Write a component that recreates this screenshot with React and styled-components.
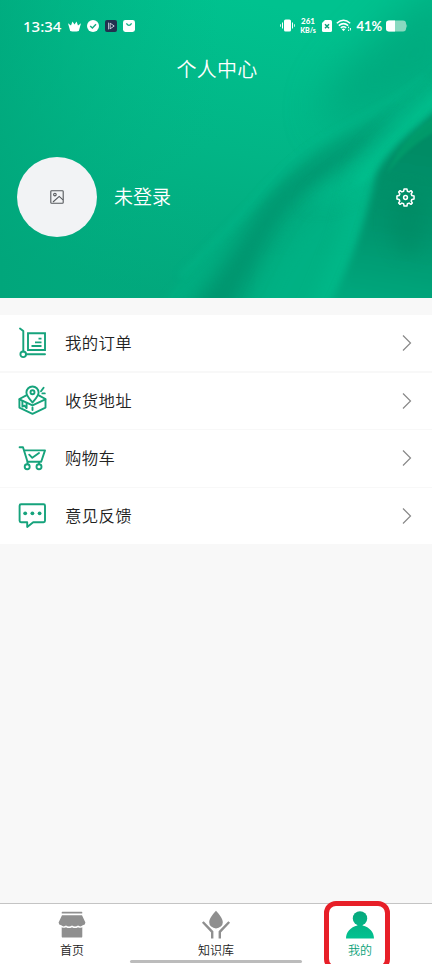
import React from "react";
import styled, { createGlobalStyle } from "styled-components";

const GlobalStyle = createGlobalStyle`
  body {
    margin: 0;
    background-color: #f8f8f8;
    font-family: "Noto Sans CJK SC", sans-serif;
  }
`;

const Page = styled.div`
  display: flex;
  flex-direction: column;
  width: 432px;
  height: 964px;
  overflow: hidden;
  background-color: #f8f8f8;
`;

const Hero = styled.header`
  position: relative;
  height: 298px;
  color: #fff;
  overflow: hidden;
`;

const HeroArt = styled.svg`
  position: absolute;
  inset: 0;
`;

const HeroContent = styled.div`
  position: relative;
  display: flex;
  flex-direction: column;
`;

const StatusBar = styled.div`
  display: flex;
  justify-content: space-between;
  align-items: center;
  height: 51px;
  padding: 0 24px 0 23px;
  font-family: Lato, sans-serif;
`;

const StatusGroup = styled.div`
  display: flex;
  align-items: center;
  gap: ${(props) => props.gap};
`;

const Clock = styled.span`
  width: 39px;
  font-family: "Noto Sans", sans-serif;
  font-size: 15px;
  font-weight: 500;
  line-height: 20px;
  white-space: nowrap;
`;

const NetSpeed = styled.span`
  display: flex;
  flex-direction: column;
  align-items: center;
  width: 18px;
  font-size: 8px;
  font-weight: 900;
  line-height: 9px;
`;

const NetUnit = styled.span`
  font-size: 7px;
  line-height: 8px;
`;

const Percent = styled.span`
  width: 25px;
  font-size: 13px;
  font-weight: 700;
  line-height: 18px;
`;

const Title = styled.h1`
  margin: 0;
  height: 36px;
  padding-left: 2px;
  font-size: 20px;
  font-weight: 350;
  line-height: 36px;
  letter-spacing: 0.3px;
  text-align: center;
`;

const Profile = styled.div`
  display: flex;
  align-items: center;
  height: 80px;
  margin-top: 70px;
  padding: 0 17px;
`;

const Avatar = styled.div`
  display: flex;
  align-items: center;
  justify-content: center;
  width: 80px;
  height: 80px;
  border-radius: 50%;
  background-color: #f2f3f5;
`;

const UserName = styled.span`
  flex-grow: 1;
  margin: -2px 0 0 17px;
  font-size: 19px;
  font-weight: 350;
  line-height: 28px;
`;

const Menu = styled.ul`
  display: flex;
  flex-direction: column;
  gap: 1.2px;
  list-style: none;
  margin: 17px 0 0;
  padding: 0;
`;

const MenuItem = styled.li`
  display: flex;
  align-items: center;
  height: 56.4px;
  padding: 0 20px 0 17px;
  background-color: #fff;
`;

const MenuLabel = styled.span`
  flex-grow: 1;
  margin: -2px 0 0 18px;
  color: #222;
  font-size: 16.4px;
  font-weight: 350;
  letter-spacing: 0.4px;
  line-height: 24px;
`;

const TabBar = styled.nav`
  position: relative;
  display: grid;
  grid-template-columns: repeat(3, 1fr);
  height: 60px;
  margin-top: auto;
  border-top: 1px solid #c4c4c4;
  background-color: #fff;
`;

const Tab = styled.div`
  display: flex;
  flex-direction: column;
  align-items: center;
  padding-top: 6px;
  color: ${(props) => (props.$active ? "#0a9f78" : "#222")};
  font-size: 12px;
  font-weight: 350;
  line-height: 16px;
`;

const TabIcon = styled.svg`
  width: 32px;
  height: 32px;
`;

const HomeIndicator = styled.div`
  position: absolute;
  left: 130px;
  bottom: 1px;
  width: 172px;
  height: 3px;
  border-radius: 2px;
  background-color: #bcbcbc;
`;

const Highlight = styled.div`
  position: absolute;
  left: 324px;
  top: -3px;
  box-sizing: border-box;
  width: 66px;
  height: 70px;
  border: 5px solid #e71f28;
  border-radius: 12px;
`;

const Waves = () => (
  <HeroArt width="432" height="298" viewBox="0 0 432 298">
    <defs>
      <linearGradient id="base" gradientUnits="userSpaceOnUse" x1="250" y1="0" x2="190" y2="298">
        <stop offset="0" stopColor="#00c28f" />
        <stop offset="0.5" stopColor="#02b586" />
        <stop offset="1" stopColor="#02a67b" />
      </linearGradient>
      <linearGradient id="left" x1="0" y1="0" x2="1" y2="0">
        <stop offset="0" stopColor="#00a67b" stopOpacity="0.7" />
        <stop offset="1" stopColor="#00b485" stopOpacity="0" />
      </linearGradient>
      <linearGradient id="corner" gradientUnits="userSpaceOnUse" x1="410" y1="150" x2="385" y2="305">
        <stop offset="0" stopColor="#018c65" />
        <stop offset="0.5" stopColor="#01946d" />
        <stop offset="1" stopColor="#01a87d" />
      </linearGradient>
      <filter id="soft" filterUnits="userSpaceOnUse" x="-40" y="-40" width="520" height="400">
        <feGaussianBlur stdDeviation="1.5" />
      </filter>
      <filter id="softer" filterUnits="userSpaceOnUse" x="-40" y="-40" width="520" height="400">
        <feGaussianBlur stdDeviation="3.5" />
      </filter>
      <filter id="haze" filterUnits="userSpaceOnUse" x="-40" y="-40" width="520" height="400">
        <feGaussianBlur stdDeviation="9" />
      </filter>
      <filter id="cloud" filterUnits="userSpaceOnUse" x="-80" y="-80" width="600" height="460">
        <feGaussianBlur stdDeviation="20" />
      </filter>
      <clipPath id="drape">
        <path d="M440 62C415 85 398 97 373 110C345 126 330 134 310 147C290 160 280 172 268 185C250 206 235 222 227 231C208 250 190 272 165 300H440Z" />
      </clipPath>
    </defs>
    <rect width="432" height="298" fill="url(#base)" />
    <rect width="220" height="298" fill="url(#left)" />
    <path d="M460-30L460 80L330 130C310 100 340 70 400 10Z" fill="#009e76" opacity="0.6" filter="url(#cloud)" />
    <path d="M455 52C415 90 398 99 373 112C345 128 330 136 310 149C270 180 262 196 227 231C208 250 190 272 165 300L460 330Z" fill="#01ad80" filter="url(#softer)" />
    <g clipPath="url(#drape)">
      <path d="M250 320C275 265 290 240 310 220C335 198 350 192 368 165L372 320Z" fill="#01b486" opacity="0.6" filter="url(#haze)" />
      <path d="M180 320C212 285 232 250 258 212C285 175 325 152 400 118C370 150 335 168 302 195C272 222 262 262 226 320Z" fill="#008b67" opacity="0.68" filter="url(#haze)" />
      <path d="M460 70C425 98 395 125 375 146C345 172 325 186 305 204C325 206 345 200 368 185C378 155 420 120 460 90Z" fill="#00c08f" opacity="0.6" filter="url(#haze)" />
      <path d="M455 76C425 103 398 130 376 155C366 166 360 174 354 186C362 184 366 182 371 178C385 150 420 118 455 92Z" fill="#00c290" opacity="0.55" filter="url(#softer)" />
      <path d="M450 82C415 113 385 140 365 168C358 210 348 250 315 320" fill="none" stroke="#00c18f" strokeWidth="14" opacity="0.6" filter="url(#haze)" />
    </g>
    <path d="M425 76C410 90 395 101 373 113C330 136 310 147 270 186C250 209 225 233 180 276" fill="none" stroke="#00b98a" strokeWidth="5" opacity="0.5" filter="url(#softer)" />
    <path d="M455 96C415 130 388 150 376 176C369 208 358 252 322 322L455 322Z" fill="url(#corner)" filter="url(#softer)" />
    <ellipse cx="408" cy="222" rx="18" ry="35" fill="#00855f" opacity="0.4" filter="url(#haze)" />
    <path d="M387 174C402 154 417 142 436 131L436 116C412 132 397 149 387 174Z" fill="#06a76e" opacity="0.5" filter="url(#soft)" />
  </HeroArt>
);

const CrownIcon = () => (
  <svg width="13" height="12" viewBox="0 0 13 12" fill="#fff">
    <path d="M0 3.2L3 5.4L4.5 1.6L6.5 4.4L8.5 1.6L10 5.4L13 3.2L10.8 11Q6.5 12 2.2 11Z" />
  </svg>
);

const CheckBadge = () => (
  <svg width="12" height="12" viewBox="0 0 12 12">
    <circle cx="6" cy="6" r="6" fill="#fff" />
    <path d="M3.2 6L5.4 8.1L9 4.3" fill="none" stroke="#12ae84" strokeWidth="1.4" />
  </svg>
);

const PlayBadge = () => (
  <svg width="12" height="12" viewBox="0 0 12 12">
    <rect width="12" height="12" rx="2" fill="#22304f" />
    <path d="M3.6 2.6V9.4M5.2 9V3.2L9.2 6L5.2 8.8" fill="none" stroke="#e7ecf5" strokeWidth="0.8" />
  </svg>
);

const BagBadge = () => (
  <svg width="12" height="12" viewBox="0 0 12 12">
    <rect width="12" height="12" rx="2.4" fill="#fff" />
    <path d="M3.4 3.4Q6 7.4 8.6 3.4" fill="none" stroke="#12ae84" strokeWidth="1.3" />
  </svg>
);

const VibrateIcon = () => (
  <svg width="15" height="13" viewBox="0 0 15 13" fill="#fff">
    <rect x="4" y="0.5" width="7" height="12" rx="1.6" />
    <path d="M2 3.5H3V9.5H2ZM12 3.5H13V9.5H12ZM0.2 5.2H1V7.8H0.2ZM14 5.2H14.8V7.8H14Z" />
  </svg>
);

const SimIcon = () => (
  <svg width="10" height="12" viewBox="0 0 10 12">
    <path d="M3 0H8.4Q10 0 10 1.6V10.4Q10 12 8.4 12H1.6Q0 12 0 10.4V3Z" fill="#fff" />
    <path d="M3 4.2L7 8.2M7 4.2L3 8.2" stroke="#0a9f78" strokeWidth="1.5" />
  </svg>
);

const WifiIcon = () => (
  <svg width="16" height="13" viewBox="0 0 16 13" fill="none" stroke="#fff" strokeWidth="1.5">
    <path d="M0.8 4.2Q7.5-1.6 14.2 4.2M2.8 6.6Q7.5 2.6 12.2 6.6M4.8 8.9Q7.5 6.6 10.2 8.9" />
    <path d="M5.8 10.2Q7.5 9 9.2 10.2L7.5 12.2Z" fill="#fff" stroke="none" />
    <path d="M12.6 7.6V9.2M12.6 10.6V12M14.4 9V11.4" strokeWidth="1" />
  </svg>
);

const BatteryIcon = () => (
  <svg width="22" height="12" viewBox="0 0 22 12">
    <rect x="0" y="0.5" width="20" height="11" rx="3" fill="#8ad9c0" />
    <path d="M20.3 3.6Q22 6 20.3 8.4Z" fill="#8ad9c0" />
    <path d="M9 0.5H3Q0 0.5 0 3.5V8.5Q0 11.5 3 11.5H9Z" fill="#fff" />
  </svg>
);

const PictureIcon = () => (
  <svg width="14" height="14" viewBox="0 0 14 14" fill="none" stroke="#55585c" strokeWidth="1.1">
    <rect x="0.8" y="0.8" width="12.4" height="12.4" rx="0.8" />
    <circle cx="4.9" cy="4.6" r="1.3" />
    <path d="M3 12L9.2 6.4L13 9.8" />
  </svg>
);

const GearIcon = () => (
  <svg width="19" height="19" viewBox="0 0 20 20" fill="none" stroke="#fff" strokeWidth="1.6" strokeLinejoin="round">
    <path d="M8.5 1H11.5L12 3.4L13.8 4.1L15.8 2.8L17.2 4.2L16 6.2L16.7 8L19 8.5V11.5L16.7 12L16 13.8L17.2 15.8L15.8 17.2L13.8 15.9L12 16.6L11.5 19H8.5L8 16.6L6.2 15.9L4.2 17.2L2.8 15.8L4 13.8L3.3 12L1 11.5V8.5L3.3 8L4 6.2L2.8 4.2L4.2 2.8L6.2 4.1L8 3.4Z" />
    <circle cx="10" cy="10" r="2" />
  </svg>
);

const MenuIcon = styled.svg`
  width: 30px;
  height: 34px;
  margin-top: ${(props) => props.$top || "-2px"};
  fill: none;
  stroke: #16a37c;
  stroke-width: 1.9;
  stroke-linecap: round;
  stroke-linejoin: round;
`;

const OrderIcon = () => (
  <MenuIcon viewBox="0 0 30 34">
    <path d="M3 3.5L6.3 6V26.5" />
    <circle cx="6.2" cy="29.3" r="2.8" />
    <path d="M9 29.3H28" />
    <path d="M11 8.2H28V25H11Z" strokeLinejoin="miter" />
    <path d="M21.5 13.6H24.5M18 17.4H24.5M14.5 21H24.5" strokeLinecap="butt" />
  </MenuIcon>
);

const AddressIcon = () => (
  <MenuIcon viewBox="0 0 30 34">
    <path d="M15.5 19.5C12 15.5 9.4 13 9.4 9.6A6.1 6.1 0 0 1 21.6 9.6C21.6 13 19 15.5 15.5 19.5Z" />
    <circle cx="15.5" cy="9.3" r="2" />
    <path d="M9.3 12.4L2.4 16V24.6L15.5 30.8L28.5 24.6V16L21.8 12.4" />
    <path d="M2.6 16.3L15.5 22.3L28.3 16.3" />
    <path d="M5.4 18V23.6L7.4 22.6L9.6 25V20.2" />
    <path d="M15.5 24.5V27M24 8.3L26.6 4.8M25.4 10.4H27.8" />
  </MenuIcon>
);

const CartIcon = () => (
  <MenuIcon viewBox="0 0 30 34" $top="0">
    <path d="M2.6 6.3H6L10.5 20.7H24.2L28 9.4H7" />
    <path d="M12.2 13.7L15.3 16.8L22 12" />
    <circle cx="10.2" cy="25.8" r="2.5" />
    <circle cx="22" cy="25.8" r="2.5" />
    <path d="M10.5 21V23M22 21V23" />
  </MenuIcon>
);

const FeedbackIcon = () => (
  <MenuIcon viewBox="0 0 30 34" $top="0">
    <path d="M4 5.3H26.6Q28 5.3 28 6.7V21.8Q28 23.2 26.6 23.2H16.2L10.2 28V23.2H4Q2.6 23.2 2.6 21.8V6.7Q2.6 5.3 4 5.3Z" />
    <g fill="#16a37c" stroke="none">
      <circle cx="8.2" cy="14.3" r="1.9" />
      <circle cx="15.4" cy="14.3" r="1.9" />
      <circle cx="22.6" cy="14.3" r="1.9" />
    </g>
  </MenuIcon>
);

const Chevron = () => (
  <svg width="10" height="18" viewBox="0 0 10 18" fill="none" stroke="#888" strokeWidth="1.2">
    <path d="M1 1.5L8.5 9L1 16.5" />
  </svg>
);

const HomeIcon = () => (
  <TabIcon viewBox="0 0 32 32" fill="#8f8f8f">
    <rect x="5.7" y="1.8" width="20.6" height="1.8" rx="0.6" />
    <path d="M6 5.2H26L29.4 12.5Q29.4 15 26.8 15.3Q24.5 17.3 22 15.6Q19 17.5 16 15.6Q13 17.5 10 15.6Q7.5 17.3 5.2 15.3Q2.6 15 2.6 12.5Z" />
    <path d="M5.7 17.2Q8 18.4 10 17.2Q13 19 16 17.2Q19 19 22 17.2Q24 18.4 26.3 17.2V26.4Q26.3 27.6 25.1 27.6H6.9Q5.7 27.6 5.7 26.4Z" />
  </TabIcon>
);

const KnowledgeIcon = () => (
  <TabIcon viewBox="0 0 32 32">
    <path d="M16 0.8C18.8 4 22.8 8.2 22.8 12.2A6.8 6.2 0 0 1 9.2 12.2C9.2 8.2 13.2 4 16 0.8Z" fill="#8f8f8f" />
    <path d="M2.8 12L12.2 21.8V28.6M29.2 12L19.8 21.8V28.6" fill="none" stroke="#8f8f8f" strokeWidth="2.4" />
  </TabIcon>
);

const MineIcon = () => (
  <TabIcon viewBox="0 0 32 32">
    <defs>
      <linearGradient id="mine" gradientUnits="userSpaceOnUse" x1="0" y1="1" x2="0" y2="29">
        <stop offset="0" stopColor="#07a67b" />
        <stop offset="1" stopColor="#02c391" />
      </linearGradient>
    </defs>
    <circle cx="16" cy="8.4" r="7.2" fill="url(#mine)" />
    <path d="M13.4 14H18.6V15.4C25.5 17 30 22 30 28.6H2C2 22 6.5 17 13.4 15.4Z" fill="url(#mine)" />
  </TabIcon>
);

const menuItems = [
  { label: "我的订单", Icon: OrderIcon },
  { label: "收货地址", Icon: AddressIcon },
  { label: "购物车", Icon: CartIcon },
  { label: "意见反馈", Icon: FeedbackIcon },
];

const tabs = [
  { label: "首页", Icon: HomeIcon },
  { label: "知识库", Icon: KnowledgeIcon },
  { label: "我的", Icon: MineIcon, active: true },
];

const App = () => (
  <Page>
    <GlobalStyle />
    <Hero>
      <Waves />
      <HeroContent>
        <StatusBar>
          <StatusGroup gap="6px">
            <Clock>13:34</Clock>
            <CrownIcon />
            <CheckBadge />
            <PlayBadge />
            <BagBadge />
          </StatusGroup>
          <StatusGroup gap="4.5px">
            <VibrateIcon />
            <NetSpeed>
              261
              <NetUnit>KB/s</NetUnit>
            </NetSpeed>
            <SimIcon />
            <WifiIcon />
            <Percent>41%</Percent>
            <BatteryIcon />
          </StatusGroup>
        </StatusBar>
        <Title>个人中心</Title>
        <Profile>
          <Avatar>
            <PictureIcon />
          </Avatar>
          <UserName>未登录</UserName>
          <GearIcon />
        </Profile>
      </HeroContent>
    </Hero>
    <Menu>
      {menuItems.map(({ label, Icon }) => (
        <MenuItem key={label}>
          <Icon />
          <MenuLabel>{label}</MenuLabel>
          <Chevron />
        </MenuItem>
      ))}
    </Menu>
    <TabBar>
      {tabs.map(({ label, Icon, active }) => (
        <Tab key={label} $active={active}>
          <Icon />
          {label}
        </Tab>
      ))}
      <HomeIndicator />
      <Highlight />
    </TabBar>
  </Page>
);

export default App;
